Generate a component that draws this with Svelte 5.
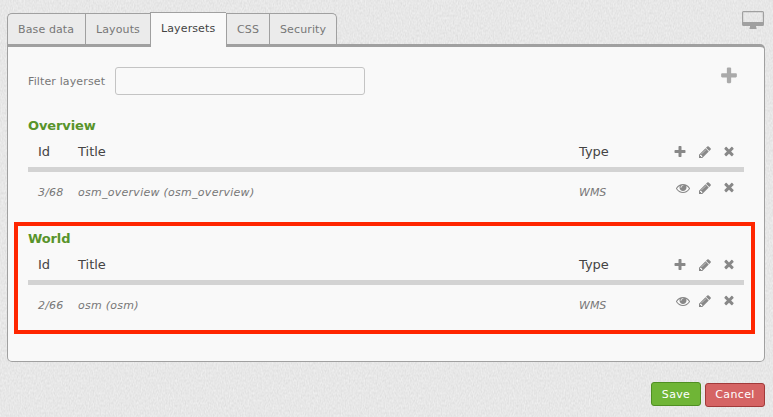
<script>
  const tabs = ['Base data', 'Layouts', 'Layersets', 'CSS', 'Security'];
  const active = 'Layersets';
  const widths = { 'Base data': 78, Layouts: 65, Layersets: 76, CSS: 43, Security: 68 };
  const sets = [
    { name: 'Overview', id: '3/68', title: 'osm_overview (osm_overview)', type: 'WMS' },
    { name: 'World', id: '2/66', title: 'osm (osm)', type: 'WMS', marked: true }
  ];
  const icons = {
    plus: 'M1600 736v192q0 40-28 68t-68 28h-416v416q0 40-28 68t-68 28h-192q-40 0-68-28t-28-68v-416h-416q-40 0-68-28t-28-68v-192q0-40 28-68t68-28h416v-416q0-40 28-68t68-28h192q40 0 68 28t28 68v416h416q40 0 68 28t28 68z',
    times: 'M1490 1322q0 40-28 68l-136 136q-28 28-68 28t-68-28l-294-294-294 294q-28 28-68 28t-68-28l-136-136q-28-28-28-68t28-68l294-294-294-294q-28-28-28-68t28-68l136-136q28-28 68-28t68 28l294 294 294-294q28-28 68-28t68 28l136 136q28 28 28 68t-28 68l-294 294 294 294q28 28 28 68z',
    pencil: 'M491 1536l91-91-235-235-91 91v107h128v128h107zm523-928q0-22-22-22-10 0-17 7l-542 542q-7 7-7 17 0 22 22 22 10 0 17-7l542-542q7-7 7-17zm-54-192l416 416-832 832h-416v-416zm683 96q0 53-37 90l-166 166-416-416 166-165q36-38 90-38 53 0 91 38l235 234q37 39 37 91z',
    eye: 'M1664 960q-152-236-381-353 61 104 61 225 0 185-131.5 316.5t-316.5 131.5-316.5-131.5-131.5-316.5q0-121 61-225-229 117-381 353 133 205 333.5 326.5t434.5 121.5 434.5-121.5 333.5-326.5zm-720-384q0-20-14-34t-34-14q-125 0-214.5 89.5t-89.5 214.5q0 20 14 34t34 14 34-14 14-34q0-86 61-147t147-61q20 0 34-14t14-34zm848 384q0 34-20 69-140 230-376.5 368.5t-499.5 138.5-499.5-139-376.5-368q-20-35-20-69t20-69q140-229 376.5-368t499.5-139 499.5 139 376.5 368q20 35 20 69z'
  };
</script>

{#snippet icon(name, cls = '')}
  <svg class="icon {name} {cls}" viewBox="0 0 1792 1792" aria-hidden="true"><path d={icons[name]} /></svg>
{/snippet}

<div class="page">
  <svg class="texture" width="773" height="417" aria-hidden="true">
    <filter id="grain" x="0" y="0" width="100%" height="100%" color-interpolation-filters="sRGB">
      <feTurbulence type="fractalNoise" baseFrequency="0.75 0.4" numOctaves="1" seed="4" result="a" />
      <feColorMatrix values="0.09 0.05 0 0 0.836  0.09 0.05 0 0 0.836  0.09 0.05 0 0 0.836  0 0 0 0 1" />
    </filter>
    <rect width="773" height="417" filter="url(#grain)" />
  </svg>

  <header>
    <nav>
      {#each tabs as tab}
        <button class="tab" class:active={tab === active} style="width: {widths[tab]}px">{tab}</button>
      {/each}
    </nav>
    <svg class="screen" width="22" height="19" viewBox="0 0 22 19" aria-hidden="true">
      <path fill-rule="evenodd" d="M1.500 0h19Q22 0 22 1.500v12Q22 15 20.500 15H14v1.500h.5v1.500h-7v-1.500H8v-1.500H1.500Q0 15 0 13.500V1.500Q0 0 1.500 0zM1.200 1.200v9.800h19.600V1.200z" />
    </svg>
  </header>

  <main>
    <div class="filter">
      <label for="filter">Filter layerset</label>
      <input id="filter" type="text" />
      {@render icon('plus', 'big')}
    </div>
    {#each sets as set}
      <section class:marked={set.marked}>
        <h2>{set.name}</h2>
        <div class="row head">
          <span class="id">Id</span><span class="title">Title</span><span class="type">Type</span>
          <span class="actions">{@render icon('plus')}{@render icon('pencil')}{@render icon('times')}</span>
        </div>
        <div class="row item">
          <span class="id">{set.id}</span><span class="title">{set.title}</span><span class="type">{set.type}</span>
          <span class="actions">{@render icon('eye')}{@render icon('pencil')}{@render icon('times')}</span>
        </div>
      </section>
    {/each}
  </main>

  <footer>
    <button class="btn save">Save</button>
    <button class="btn cancel">Cancel</button>
  </footer>
</div>

<style>
  :global(body) { margin: 0; overflow: hidden; }
  .page {
    position: relative;
    box-sizing: border-box;
    width: 773px;
    height: 417px;
    padding: 0 8px 0 7px;
    overflow: hidden;
    background: #e6e6e6;
    font: 11px/14px "DejaVu Sans", sans-serif;
    color: #777;
    display: flex;
    flex-direction: column;
  }
  .texture { position: absolute; left: 0; top: 0; z-index: 0; }
  header, main, footer { position: relative; z-index: 1; }
  header { height: 44px; flex: none; display: flex; justify-content: space-between; align-items: flex-end; z-index: 2; }
  nav { display: flex; align-items: flex-end; height: 44px; }
  button { font-family: inherit; font-size: 11px; margin: 0; box-sizing: border-box; white-space: nowrap; }
  .tab {
    height: 31px;
    padding: 2px 0 0 10px;
    text-align: left;
    line-height: 28px;
    letter-spacing: 0.12px;
    color: #777;
    background: #ebebeb;
    border: solid #a0a0a0;
    border-width: 1px 0 0 1px;
  }
  .tab:first-child { border-top-left-radius: 5px; }
  .tab:last-child { border-right-width: 1px; border-top-right-radius: 5px; }
  .tab.active { height: 35px; margin-bottom: -3px; padding: 2px 0 4px 10px; background: #f9f9f9; color: #444; }
  .screen { fill: #a0a0a0; margin: 0 1px 14px 0; }
  main {
    box-sizing: border-box;
    height: 318px;
    flex: none;
    padding: 20px;
    background: #f9f9f9;
    border: 1px solid #a0a0a0;
    border-top-width: 3px;
    border-radius: 0 5px 5px 5px;
  }
  .filter { display: flex; align-items: center; height: 28px; }
  .filter label { width: 87px; padding-top: 2px; letter-spacing: 0.13px; }
  input { box-sizing: border-box; width: 250px; height: 28px; border: 1px solid #c4c4c4; border-radius: 3px; background: #f9f9f9; padding: 0 8px; font: inherit; }
  .icon { width: 14px; height: 14px; fill: #888; display: block; flex: none; }
  .icon.big { width: 20px; height: 20px; fill: #aaa; margin: -10px 5px 0 auto; }
  section { position: relative; height: 90px; margin-top: 23px; }
  .marked::after {
    content: "";
    position: absolute;
    left: -14px;
    top: -9px;
    box-sizing: border-box;
    width: 741px;
    height: 112px;
    border: 4px solid #ff2600;
  }
  h2 { margin: 0; font-size: 13px; line-height: 15px; letter-spacing: -0.12px; color: #58942b; }
  .row { display: flex; padding-left: 10px; }
  .head { box-sizing: border-box; height: 39px; padding-top: 11px; border-bottom: 5px solid #d3d3d3; font-size: 13px; line-height: 15px; color: #444; }
  .item { padding-top: 14px; line-height: 14px; font-style: italic; }
  .id { width: 40px; }
  .item .id { letter-spacing: 0.15px; }
  .item .title { letter-spacing: 0.27px; }
  .title { width: 501px; }
  .type { width: 94px; }
  .actions { display: flex; padding-top: 0.5px; gap: 11px; }
  .item .actions { margin-top: -5.5px; padding-top: 0; }
  .icon.times { margin: -0.5px 0 0 -1px; }
  .icon.pencil { margin-left: -0.5px; margin-right: 0.5px; }
  .icon.eye { margin: 0 -2.5px 0 2.5px; }
  footer { display: flex; align-items: flex-start; justify-content: flex-end; gap: 4px; padding-top: 20px; }
  .btn { height: 24px; padding: 0; border: 1px solid; border-radius: 3px; color: #fff; letter-spacing: 0.35px; line-height: 22px; }
  .save { width: 50px; padding-top: 1px; background: #6fb536; border-color: #4f8f22; }
  .cancel { width: 60px; margin-top: 1px; background: #d56464; border-color: #a13a3a; }
</style>
